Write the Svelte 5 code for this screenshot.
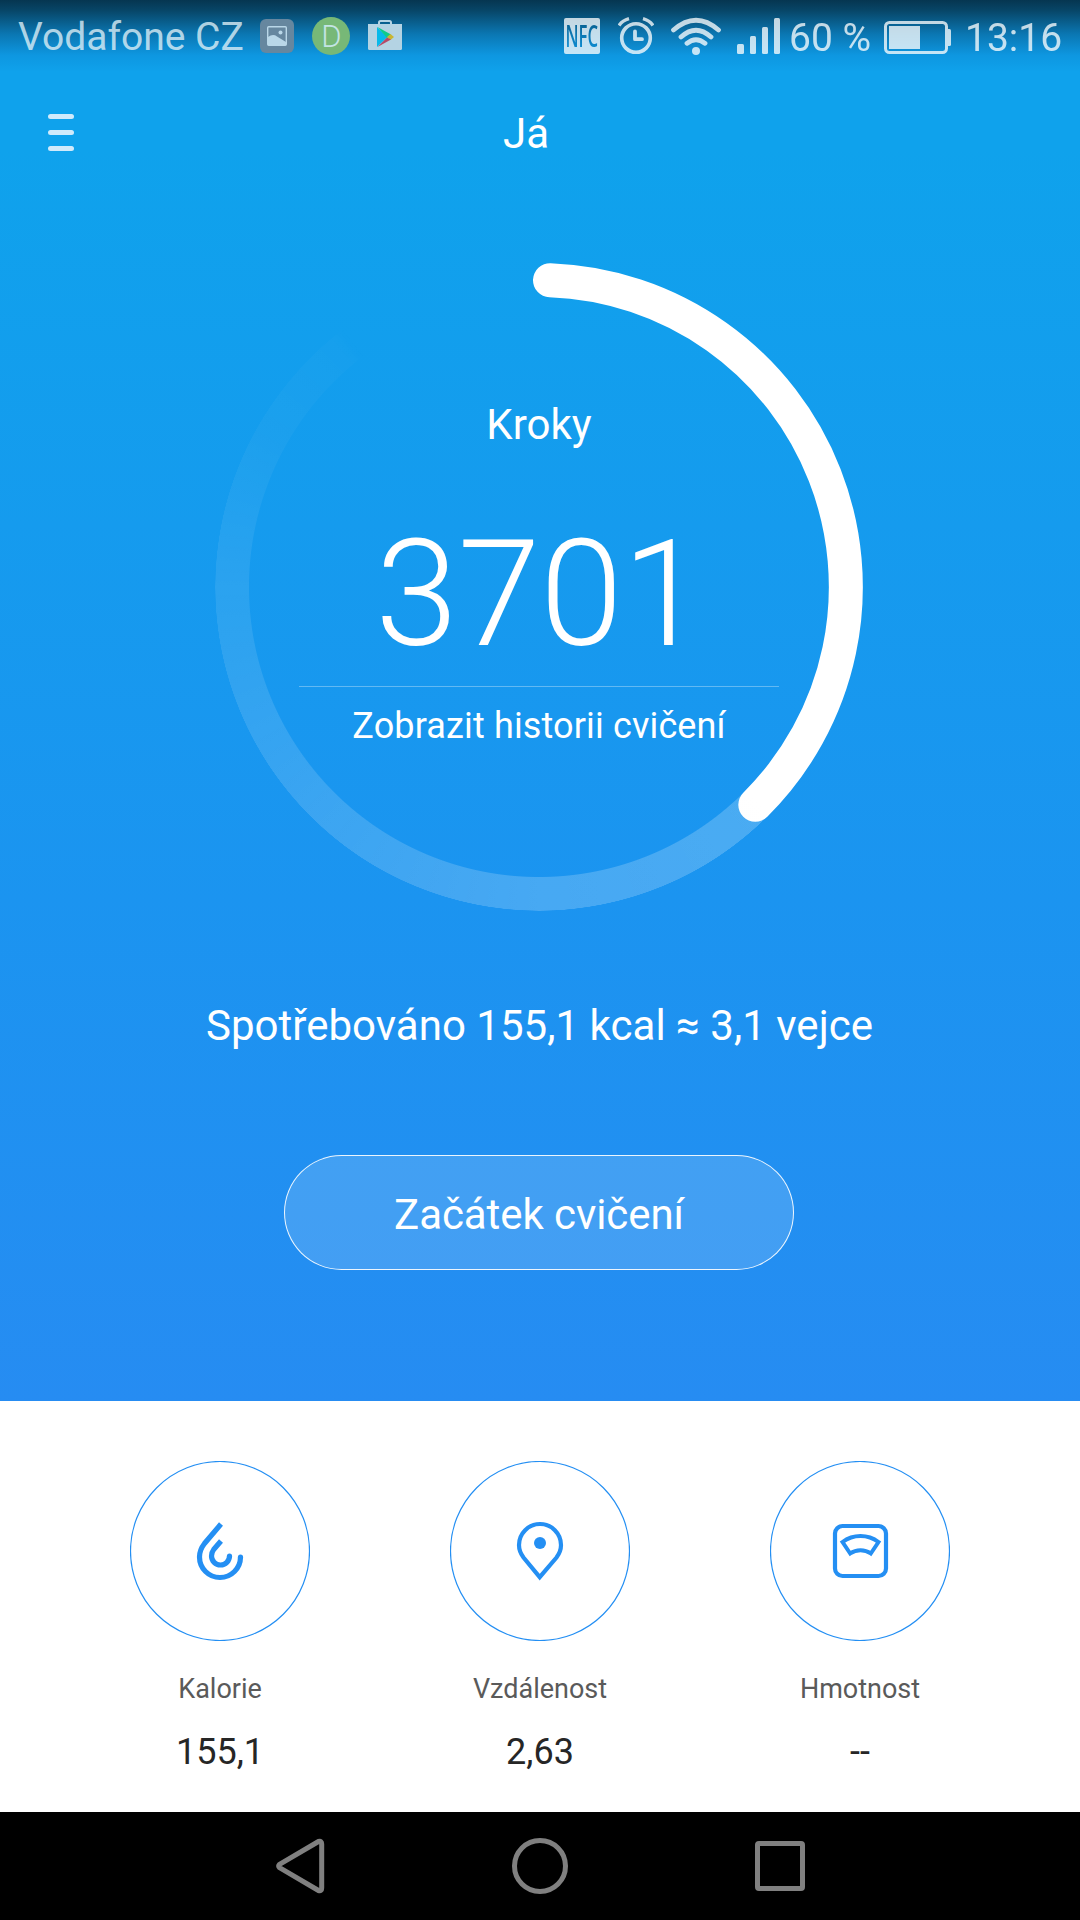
<script>
  const metrics = [
    { id: 'calories', label: 'Kalorie', value: '155,1' },
    { id: 'distance', label: 'Vzdálenost', value: '2,63' },
    { id: 'weight', label: 'Hmotnost', value: '--' }
  ];
</script>

<div class="screen">
  <section class="hero">
    <div class="status">
      <span class="carrier">Vodafone CZ</span>
      <svg class="photo" width="34" height="60" viewBox="260 0 34 60">
        <rect x="260" y="19" width="34" height="34" rx="6" fill="#66879f" />
        <rect x="267.7" y="26.7" width="18.6" height="18.6" rx="1" fill="none" stroke="#b9d7e8" stroke-width="1.4" />
        <path d="M268 37Q273 33.500 277 36.500L286 42V45H268Z" fill="#b9d7e8" />
        <circle cx="280.500" cy="32.500" r="2" fill="#b9d7e8" />
      </svg>
      <svg class="badge" width="38" height="60" viewBox="312 0 38 60">
        <circle cx="331" cy="36" r="19" fill="#77b877" />
        <text x="331.500" y="47" text-anchor="middle" class="badge-letter">D</text>
      </svg>
      <svg class="store" width="34" height="60" viewBox="368 0 34 60">
        <path d="M379 25V22.500Q379 21 380.500 21H389.500Q391 21 391 22.500V25" fill="none" stroke="#b4d3e3" stroke-width="2" />
        <path d="M368 24H402V48.500Q402 50 400.500 50H369.500Q368 50 368 48.500Z" fill="#b4d3e3" />
        <path d="M377 27V47L387.500 37Z" fill="#08b9ea" />
        <path d="M377.500 27L391 34.500L387 38Z" fill="#10cb8b" />
        <path d="M387 37L390.500 34L394 37L390.500 40Z" fill="#c9b632" />
        <path d="M377.500 47L387 37.500L391 39.500Z" fill="#b54a68" />
      </svg>

      <div class="system">
        <svg class="nfc" width="36" height="60" viewBox="564 0 36 60">
          <defs>
            <mask id="nfc-cut">
              <rect x="564" y="18" width="36" height="36" rx="2" fill="#fff" />
              <text x="565.500" y="46.500" textLength="32.500" lengthAdjust="spacingAndGlyphs" class="nfc-text">NFC</text>
            </mask>
          </defs>
          <rect x="564" y="18" width="36" height="36" fill="#fff" mask="url(#nfc-cut)" />
        </svg>
        <svg class="alarm" width="36" height="60" viewBox="618 0 36 60" fill="none" stroke="#fff">
          <circle cx="636" cy="38" r="14.300" stroke-width="3.600" />
          <path d="M635 31.500V39.200H642" stroke-width="3.800" stroke-linecap="round" stroke-linejoin="round" />
          <path d="M619 25.500Q622.500 20.500 629 18.700M653 25.500Q649.500 20.500 643 18.700" stroke-width="3.400" />
        </svg>
        <svg class="wifi" width="50" height="60" viewBox="671 0 50 60" fill="none" stroke="#fff" stroke-width="4.800" stroke-linecap="round">
          <path d="M673.500 30Q696 10.500 718.500 30M681 37Q696 23.500 711 37M687 43.300Q696 36 705 43.300" />
          <circle cx="696" cy="51" r="4" fill="#fff" stroke="none" />
        </svg>
        <svg class="signal" width="43" height="60" viewBox="737 0 43 60" fill="#fff">
          <rect x="737" y="44" width="7" height="10" rx="1.500" />
          <rect x="750" y="36" width="6" height="18" rx="1.500" />
          <rect x="762" y="27" width="6" height="27" rx="1.500" />
          <rect x="774" y="18" width="6" height="36" rx="1.500" />
        </svg>
        <span class="percent">60 %</span>
        <svg class="battery" width="67" height="60" viewBox="884 0 67 60">
          <rect x="885.500" y="22.500" width="61" height="30" rx="4" fill="none" stroke="#fff" stroke-width="3" />
          <rect x="889" y="26" width="31" height="23" fill="#fff" />
          <path d="M948 29H949.500Q951 29 951 30.500V44.500Q951 46 949.500 46H948Z" fill="#fff" />
        </svg>
        <span class="clock">13:16</span>
      </div>
    </div>

    <header class="header">
      <div class="menu"><i></i><i></i><i></i></div>
      <h1>Já</h1>
    </header>

    <div class="ring">
      <div class="track"></div>
      <svg class="progress" width="648" height="648" viewBox="0 0 648 648">
        <path d="M335 17.200A307 307 0 0 1 540.300 541.700" fill="none" stroke="#fff" stroke-width="34" stroke-linecap="round" />
      </svg>
      <div class="ring-content">
        <div class="caption">Kroky</div>
        <div class="steps">3701</div>
        <div class="rule"></div>
        <div class="history">Zobrazit historii cvičení</div>
      </div>
    </div>

    <p class="burned">Spotřebováno 155,1 kcal ≈ 3,1 vejce</p>
    <button class="start">Začátek cvičení</button>
  </section>

  <section class="metrics">
    {#each metrics as m (m.id)}
      <div class="metric">
        <svg width="180" height="180" viewBox="10 11 180 180" fill="none" stroke="#248ff3">
          <circle cx="100" cy="101" r="89.500" stroke-width="1.200" />
          {#if m.id === 'calories'}
            <path d="M101 74L84.500 93.500C81 98 79.500 102 79.500 107A20.500 20.500 0 0 0 120.500 107" stroke-width="5.200" />
            <path d="M101 91L93.700 99.500C92.200 101.500 91.500 103.500 91.500 106A9 9 0 0 0 109.500 106" stroke-width="5.200" />
            <circle cx="120.500" cy="107" r="2.600" fill="#248ff3" stroke="none" />
            <circle cx="109.500" cy="106" r="2.600" fill="#248ff3" stroke="none" />
          {:else if m.id === 'distance'}
            <path d="M99.700 127.200L83.500 107.500C80.500 103.500 79 99.500 79 95A21 21 0 0 1 121 95C121 99.500 119.500 103.500 116.500 107.500Z" stroke-width="4.200" stroke-linejoin="miter" />
            <circle cx="100" cy="93" r="6" fill="#248ff3" stroke="none" />
          {:else}
            <rect x="75" y="76" width="51" height="50" rx="7.500" stroke-width="4.200" />
            <path d="M82.500 92A30 30 0 0 1 118.500 92L110.800 103.500A17.500 17.500 0 0 0 90.200 103.500Z" stroke-width="4" />
          {/if}
        </svg>
        <div class="label">{m.label}</div>
        <div class="value">{m.value}</div>
      </div>
    {/each}
  </section>

  <nav class="nav">
    <svg width="1080" height="108" viewBox="0 1812 1080 108" fill="none" stroke="#808080" stroke-width="5" stroke-linejoin="round">
      <path d="M279.500 1864.300Q277.700 1866 279.500 1867.700L318.500 1890.500Q321.700 1891.500 321.700 1888V1844Q321.700 1840.500 318.500 1841.500Z" />
      <circle cx="540" cy="1866" r="25.500" />
      <rect x="757.500" y="1843.500" width="45" height="45" rx="1.500" />
    </svg>
  </nav>
</div>

<style>
  :global(body) {
    margin: 0;
    background: #000;
  }
  .screen {
    width: 1080px;
    height: 1920px;
    overflow: hidden;
    display: flex;
    flex-direction: column;
    font-family: Roboto, 'Liberation Sans', sans-serif;
    color: #fff;
  }
  svg {
    display: block;
    flex: none;
  }
  .hero {
    height: 1401px;
    flex: none;
    display: flex;
    flex-direction: column;
    align-items: center;
    background:
      linear-gradient(rgba(2, 8, 14, 0.7) 0, rgba(2, 12, 20, 0.62) 10px, rgba(2, 30, 60, 0.33) 34px, rgba(2, 50, 120, 0.1) 55px, rgba(0, 60, 150, 0) 72px) 0 0 / 100% 72px no-repeat,
      linear-gradient(#0fa2ec 150px, #1b94f0 900px, #268cf2 1401px);
  }
  .status {
    width: 1080px;
    height: 72px;
    box-sizing: border-box;
    padding: 0 18px 0 18px;
    display: flex;
    font-size: 39px;
    line-height: 46px;
    white-space: nowrap;
  }
  .carrier {
    width: 242px;
    padding-top: 14px;
    color: rgba(222, 239, 246, 0.8);
  }
  .badge {
    margin: 0 18px;
  }
  .badge-letter {
    font-size: 31px;
    font-weight: 300;
    fill: #c4e4e4;
  }
  .system {
    margin-left: auto;
    display: flex;
    opacity: 0.76;
  }
  .nfc-text {
    font-family: 'Open Sans', sans-serif;
    font-size: 30px;
    font-weight: 600;
    fill: #000;
  }
  .alarm {
    margin-left: 18px;
  }
  .wifi {
    margin-left: 17px;
  }
  .signal {
    margin-left: 16px;
  }
  .percent {
    width: 95px;
    margin-left: 9px;
    padding-top: 15px;
  }
  .clock {
    width: 97px;
    margin-left: 14px;
    padding-top: 15px;
  }
  .header {
    width: 1080px;
    height: 191px;
    box-sizing: border-box;
    padding: 37px 0 0 48px;
    display: flex;
  }
  .menu {
    width: 26px;
    padding-top: 5px;
    display: flex;
    flex-direction: column;
    gap: 11px;
  }
  .menu i {
    height: 5px;
    border-radius: 3px;
    background: #d0eafb;
  }
  h1 {
    margin: 0 0 0 429px;
    font-size: 42px;
    line-height: 50px;
    font-weight: 400;
  }
  .ring {
    width: 648px;
    height: 648px;
    flex: none;
    display: grid;
    margin-right: 2px;
  }
  .ring > * {
    grid-area: 1 / 1;
  }
  .track {
    border-radius: 50%;
    background: conic-gradient(transparent 134deg, rgba(255, 255, 255, 0.21) 134deg, rgba(255, 255, 255, 0.195) 180deg, rgba(255, 255, 255, 0.15) 225deg, rgba(255, 255, 255, 0.09) 270deg, rgba(255, 255, 255, 0.035) 300deg, rgba(255, 255, 255, 0.018) 320deg, rgba(255, 255, 255, 0) 323deg);
    mask: radial-gradient(circle closest-side, transparent 289.500px, #000 290.500px, #000 323.500px, transparent 324px);
  }
  .ring-content {
    padding-top: 137px;
    display: flex;
    flex-direction: column;
    align-items: center;
  }
  .caption {
    font-size: 42px;
    line-height: 50px;
  }
  .steps {
    margin: 64px 0 0 2px;
    font-size: 149px;
    line-height: 160px;
    font-weight: 300;
    letter-spacing: -0.3px;
  }
  .rule {
    width: 480px;
    height: 1px;
    margin-top: 12px;
    background: rgba(255, 255, 255, 0.32);
  }
  .history {
    margin-top: 18px;
    font-size: 36px;
    line-height: 42px;
    letter-spacing: 0.14px;
  }
  .burned {
    margin: 90px 1px 0 0;
    font-size: 42px;
    line-height: 50px;
    letter-spacing: 0.03px;
    white-space: nowrap;
  }
  .start {
    width: 510px;
    height: 115px;
    margin: 104px 2px 0 0;
    padding: 4px 0 0;
    border: 1px solid rgba(255, 255, 255, 0.9);
    border-radius: 58px;
    background: rgba(255, 255, 255, 0.15);
    color: inherit;
    font: 400 42px/50px Roboto, 'Liberation Sans', sans-serif;
    letter-spacing: -0.07px;
  }
  .metrics {
    height: 411px;
    flex: none;
    box-sizing: border-box;
    padding: 60px 60px 0;
    display: grid;
    grid-template-columns: repeat(3, 320px);
    background: #fff;
    text-align: center;
  }
  .metric {
    display: flex;
    flex-direction: column;
    align-items: center;
  }
  .label {
    margin-top: 32px;
    font-size: 27px;
    line-height: 32px;
    color: #5a5a5a;
  }
  .value {
    margin-top: 26px;
    font-size: 36px;
    line-height: 42px;
    color: #262626;
  }
  .nav {
    height: 108px;
    flex: none;
    background: #000;
  }
</style>
